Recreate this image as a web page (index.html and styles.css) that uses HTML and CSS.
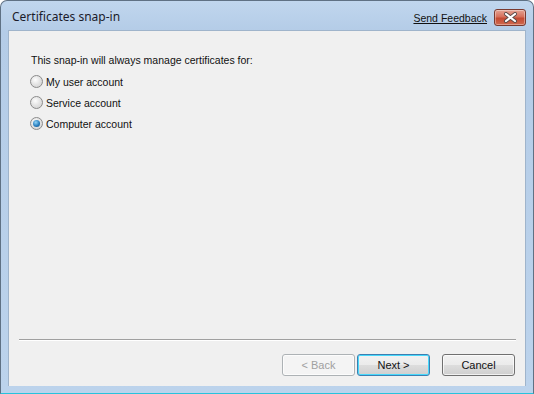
FILE: index.html
```html
<!DOCTYPE html>
<html lang="en">
<head>
    <meta charset="UTF-8">
    <title>Certificates snap-in</title>
    <link rel="stylesheet" href="styles.css">
</head>
<body>
    <div class="window">
        <div class="titlebar">
            <span class="title">Certificates snap-in</span>
            <a class="feedback" href="#">Send Feedback</a>
            <button class="close-btn" type="button" aria-label="Close">
                <svg width="15" height="11" viewBox="0 0 15 11">
                    <path d="M3 2 L12 9 M12 2 L3 9" stroke="#5a4a48" stroke-width="4" stroke-linecap="round"/>
                    <path d="M3 2 L12 9 M12 2 L3 9" stroke="#ffffff" stroke-width="2.2" stroke-linecap="round"/>
                </svg>
            </button>
        </div>
        <div class="client">
            <div class="content">
                <p class="prompt">This snap-in will always manage certificates for:</p>
                <label class="option"><span class="radio"></span>My user account</label>
                <label class="option"><span class="radio"></span>Service account</label>
                <label class="option"><span class="radio checked"></span>Computer account</label>
            </div>
            <div class="footer">
                <div class="separator"></div>
                <div class="buttons">
                    <button class="btn" type="button" disabled>&lt; Back</button>
                    <button class="btn default" type="button">Next &gt;</button>
                    <button class="btn cancel" type="button">Cancel</button>
                </div>
            </div>
        </div>
        <div class="bottom-frame"></div>
    </div>
</body>
</html>
```

FILE: styles.css
```css
body {
    margin: 0;
    padding: 0;
    background: #ffffff;
    font-family: "Liberation Sans", Arial, sans-serif;
}

.window {
    width: 534px;
    height: 394px;
    box-sizing: border-box;
    display: flex;
    flex-direction: column;
    border: 1px solid #5f7184;
    border-bottom-color: #27c3dd;
    border-radius: 7px 7px 0 0;
    background: linear-gradient(to bottom, #c0d6ee 0px, #b4cce7 30px, #bcd3ec 100%);
    overflow: hidden;
}

.titlebar {
    height: 29px;
    display: flex;
    align-items: center;
    padding: 0 7px 0 11px;
}

.title {
    flex: 1;
    font-family: "Noto Sans", sans-serif;
    font-size: 12px;
    color: #1b1b2a;
    padding-top: 2px;
}

.feedback {
    font-family: "Liberation Sans", Arial, sans-serif;
    font-size: 10.5px;
    color: #111;
    text-decoration: underline;
    margin-right: 7px;
    padding-top: 4px;
}

.close-btn {
    width: 32px;
    height: 17px;
    margin-top: 4px;
    padding: 0;
    display: flex;
    align-items: center;
    justify-content: center;
    border: 1px solid #7a3a30;
    border-radius: 3px;
    background: linear-gradient(to bottom, #e5a394 0%, #d6705c 45%, #c44a33 55%, #cf6a50 100%);
    box-shadow: inset 0 0 0 1px rgba(255, 255, 255, 0.35);
}

.client {
    flex: 1;
    margin: 0 7px;
    display: flex;
    flex-direction: column;
    background: #f0f0f0;
    border: 1px solid #9fb4cb;
    border-bottom: none;
    font-size: 10.5px;
    color: #111;
}

.content {
    padding: 22px 0 0 21px;
}

.prompt {
    margin: 0 0 3px 1px;
    line-height: 15px;
}

.option {
    display: flex;
    align-items: center;
    height: 21px;
}

.radio {
    width: 11px;
    height: 11px;
    margin-right: 3px;
    border: 1px solid #8b8b8b;
    border-radius: 50%;
    background: radial-gradient(circle at 40% 35%, #fdfdfd 0%, #e2e2e2 50%, #cfcfcf 100%);
    position: relative;
}

.radio.checked::after {
    content: "";
    position: absolute;
    left: 2px;
    top: 2px;
    width: 7px;
    height: 7px;
    border-radius: 50%;
    background: radial-gradient(circle at 40% 35%, #8fd3f7 0%, #2a7fbf 55%, #0f4f86 100%);
}

.footer {
    margin-top: auto;
    padding: 0 9px 10px 10px;
}

.separator {
    height: 1px;
    background: #a0a0a0;
    border-bottom: 1px solid #ffffff;
}

.buttons {
    display: flex;
    justify-content: flex-end;
    margin-top: 13px;
    padding-right: 1px;
}

.btn {
    width: 73px;
    height: 22px;
    padding: 0;
    font-family: "Liberation Sans", Arial, sans-serif;
    font-size: 11px;
    color: #111;
    border: 1px solid #707070;
    border-radius: 3px;
    background: linear-gradient(to bottom, #f2f2f2 0%, #ebebeb 50%, #dddddd 51%, #cfcfcf 100%);
    box-shadow: inset 0 0 0 1px rgba(255, 255, 255, 0.7);
}

.btn + .btn {
    margin-left: 2px;
}

.btn:disabled {
    color: #a0a0a0;
    border-color: #adb2b5;
    background: #f4f4f4;
}

.btn.default {
    border-color: #3c7fb1;
    box-shadow: inset 0 0 0 1px #48d8fb;
}

.btn.cancel {
    margin-left: 12px;
}

.bottom-frame {
    height: 7px;
}
```
